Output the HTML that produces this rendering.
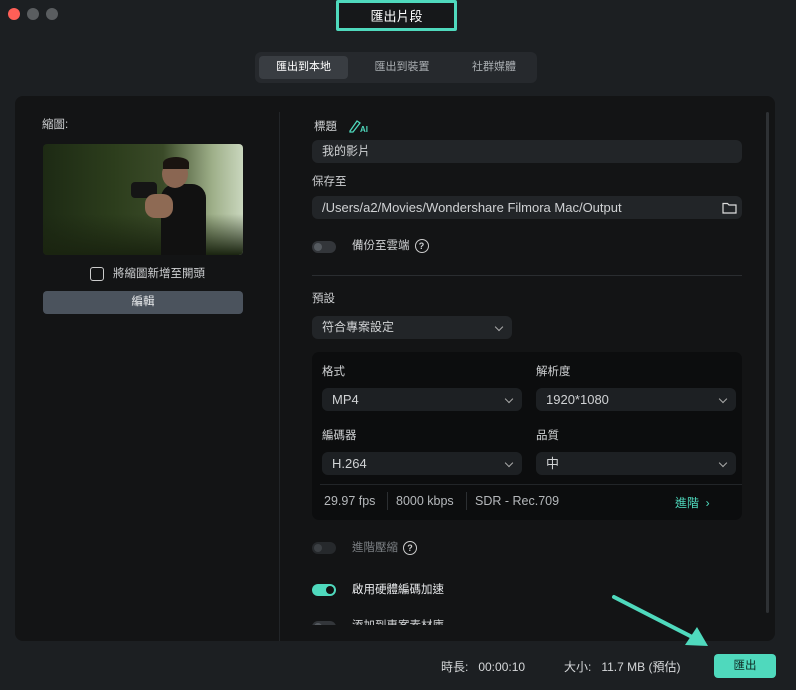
<!DOCTYPE html>
<html><head><meta charset="utf-8"><style>
*{margin:0;padding:0;box-sizing:border-box}
body{width:796px;height:690px;background:#1c1f22;font-family:"Liberation Sans","Noto Sans CJK TC",sans-serif;color:#d6d8da;font-size:12px;position:relative;overflow:hidden}
.a{position:absolute}
.dot{width:12px;height:12px;border-radius:50%;top:8px}
.field{position:absolute;background:#222528;border-radius:6px;height:23px;line-height:23px;padding-left:10px;font-size:12px;color:#d0d2d4}
.chev{position:absolute;right:10px;top:8px;width:6px;height:6px;border-right:1.3px solid #aaa;border-bottom:1.3px solid #aaa;transform:rotate(45deg)}
.lbl{position:absolute;font-size:11.5px;color:#cfd1d3;line-height:16px}
.tog{position:absolute;width:24px;height:12px;border-radius:6px;background:#33363a}
.tog i{position:absolute;left:2px;top:2px;width:8px;height:8px;border-radius:50%;background:#555a5f}
.q{display:inline-block;width:14px;height:14px;border:1.3px solid #ccc;border-radius:50%;font-size:9px;line-height:12px;text-align:center;vertical-align:middle;margin-left:5px;font-weight:bold}
</style></head><body>
<div class="a dot" style="left:8px;background:#fe5f57"></div>
<div class="a dot" style="left:27px;background:#5a5d60"></div>
<div class="a dot" style="left:46px;background:#5a5d60"></div>
<div class="a" style="left:336px;top:0;width:121px;height:31px;border:3px solid #4fd9bd;border-radius:2px;background:#16181a;text-align:center;line-height:27px;font-size:13px;color:#fff">匯出片段</div>
<div class="a" style="left:255px;top:52px;width:282px;height:31px;background:#26292d;border-radius:6px"></div>
<div class="a" style="left:259px;top:56px;width:89px;height:23px;background:#393d42;border-radius:4px;text-align:center;line-height:23px;color:#fff;font-size:11px">匯出到本地</div>
<div class="a" style="left:356px;top:56px;width:92px;line-height:23px;text-align:center;font-size:11px;color:#aaaeb2">匯出到裝置</div>
<div class="a" style="left:450px;top:56px;width:88px;line-height:23px;text-align:center;font-size:11px;color:#aaaeb2">社群媒體</div>

<div class="a" style="left:15px;top:96px;width:760px;height:545px;background:#131415;border-radius:8px"></div>
<div class="a" style="left:279px;top:112px;width:1px;height:529px;background:#222528"></div>
<div class="a" style="left:766px;top:112px;width:3px;height:501px;background:#2e3134;border-radius:2px"></div>

<div class="lbl" style="left:42px;top:117px">縮圖:</div>
<div class="a" style="left:43px;top:144px;width:200px;height:111px;border-radius:4px;overflow:hidden;background:linear-gradient(90deg,#1d2a14 0%,#2c3d1c 35%,#3a4a28 60%,#9fb08a 85%,#c9d6bd 100%)">
<div class="a" style="left:0;top:70px;width:200px;height:41px;background:linear-gradient(180deg,rgba(20,30,12,0) ,#1a2410)"></div>
<div class="a" style="left:118px;top:40px;width:45px;height:71px;background:#111;border-radius:14px 14px 0 0"></div>
<div class="a" style="left:119px;top:16px;width:26px;height:28px;background:#8a6652;border-radius:50%"></div>
<div class="a" style="left:120px;top:13px;width:26px;height:12px;background:#1a1410;border-radius:50% 50% 0 0"></div>
<div class="a" style="left:88px;top:38px;width:26px;height:16px;background:#151515;border-radius:4px"></div>
<div class="a" style="left:102px;top:50px;width:28px;height:24px;background:#8e6a54;border-radius:10px"></div>
</div>
<div class="a" style="left:90px;top:267px;width:14px;height:14px;border:1.3px solid #ccc;border-radius:3px"></div>
<div class="lbl" style="left:113px;top:266px">將縮圖新增至開頭</div>
<div class="a" style="left:43px;top:291px;width:200px;height:23px;background:#4b535d;border-radius:4px;text-align:center;line-height:23px;font-size:11.5px;color:#e6e8ea">編輯</div>

<div class="lbl" style="left:314px;top:119px">標題</div>
<svg class="a" style="left:348px;top:118px" width="22" height="16" viewBox="0 0 22 16"><path d="M2 13 L9 3 L12 5 L5 14 L2 14 Z" fill="none" stroke="#4fd9bd" stroke-width="1.3"/><text x="12" y="14" font-size="8" fill="#4fd9bd" font-family="Liberation Sans" font-weight="bold">AI</text></svg>
<div class="field" style="left:312px;top:140px;width:430px">我的影片</div>
<div class="lbl" style="left:312px;top:174px">保存至</div>
<div class="field" style="left:312px;top:196px;width:430px;font-size:13px">/Users/a2/Movies/Wondershare Filmora Mac/Output
<svg class="a" style="right:5px;top:6px" width="15" height="12" viewBox="0 0 15 12"><path d="M1 1.5 H5.5 L7 3 H14 V11 H1 Z" fill="none" stroke="#ddd" stroke-width="1.2"/></svg></div>
<div class="tog" style="left:312px;top:241px"><i></i></div>
<div class="lbl" style="left:352px;top:238px">備份至雲端<span class="q">?</span></div>
<div class="a" style="left:312px;top:275px;width:430px;height:1px;background:#2a2d30"></div>
<div class="lbl" style="left:312px;top:291px">預設</div>
<div class="field" style="left:312px;top:316px;width:200px">符合專案設定<span class="chev"></span></div>

<div class="a" style="left:312px;top:352px;width:430px;height:168px;background:#0c0d0e;border-radius:7px"></div>
<div class="lbl" style="left:322px;top:364px">格式</div>
<div class="lbl" style="left:536px;top:364px">解析度</div>
<div class="field" style="left:322px;top:388px;width:200px;font-size:13px;background:#1d2023">MP4<span class="chev"></span></div>
<div class="field" style="left:536px;top:388px;width:200px;font-size:13px;background:#1d2023">1920*1080<span class="chev"></span></div>
<div class="lbl" style="left:322px;top:428px">編碼器</div>
<div class="lbl" style="left:536px;top:428px">品質</div>
<div class="field" style="left:322px;top:452px;width:200px;font-size:13px;background:#1d2023">H.264<span class="chev"></span></div>
<div class="field" style="left:536px;top:452px;width:200px;font-size:13px;background:#1d2023">中<span class="chev"></span></div>
<div class="a" style="left:320px;top:484px;width:422px;height:1px;background:#222528"></div>
<div class="a" style="left:324px;top:494px;font-size:12.5px;color:#b5b8bb">29.97 fps</div>
<div class="a" style="left:387px;top:492px;width:1px;height:18px;background:#2c2f32"></div>
<div class="a" style="left:396px;top:494px;font-size:12.5px;color:#b5b8bb">8000 kbps</div>
<div class="a" style="left:466px;top:492px;width:1px;height:18px;background:#2c2f32"></div>
<div class="a" style="left:475px;top:494px;font-size:12.5px;color:#b5b8bb">SDR - Rec.709</div>
<div class="a" style="left:675px;top:494px;font-size:12px;color:#4fd9bd">進階 &nbsp;›</div>

<div class="tog" style="left:312px;top:542px;background:#26292c"><i style="background:#3c4044"></i></div>
<div class="lbl" style="left:352px;top:540px;color:#7b7f83">進階壓縮<span class="q" style="border-color:#ccc;color:#ccc">?</span></div>
<div class="tog" style="left:312px;top:584px;background:#4fd9bd"><i style="left:14px;background:#111"></i></div>
<div class="lbl" style="left:352px;top:582px;color:#e8eaec">啟用硬體編碼加速</div>
<div class="a" style="left:312px;top:614px;width:140px;height:11px;overflow:hidden">
<div class="tog" style="left:0;top:7px"><i></i></div>
<div class="lbl" style="left:40px;top:4px">添加到專案素材庫</div></div>

<svg class="a" style="left:0;top:0" width="796" height="690"><line x1="614" y1="597" x2="698" y2="640" stroke="#4fd9bd" stroke-width="4" stroke-linecap="round"/><path d="M708 646 L685 645 L697 627 Z" fill="#4fd9bd"/></svg>

<div class="a" style="left:441px;top:658px;font-size:12px;color:#d6d8da">時長: &nbsp;&nbsp;00:00:10</div>
<div class="a" style="left:564px;top:658px;font-size:12px;color:#d6d8da">大小: &nbsp;&nbsp;11.7 MB (預估)</div>
<div class="a" style="left:714px;top:654px;width:62px;height:24px;background:#4fd9bd;border-radius:4px;text-align:center;line-height:24px;font-size:11.5px;color:#0e2a24">匯出</div>
</body></html>
